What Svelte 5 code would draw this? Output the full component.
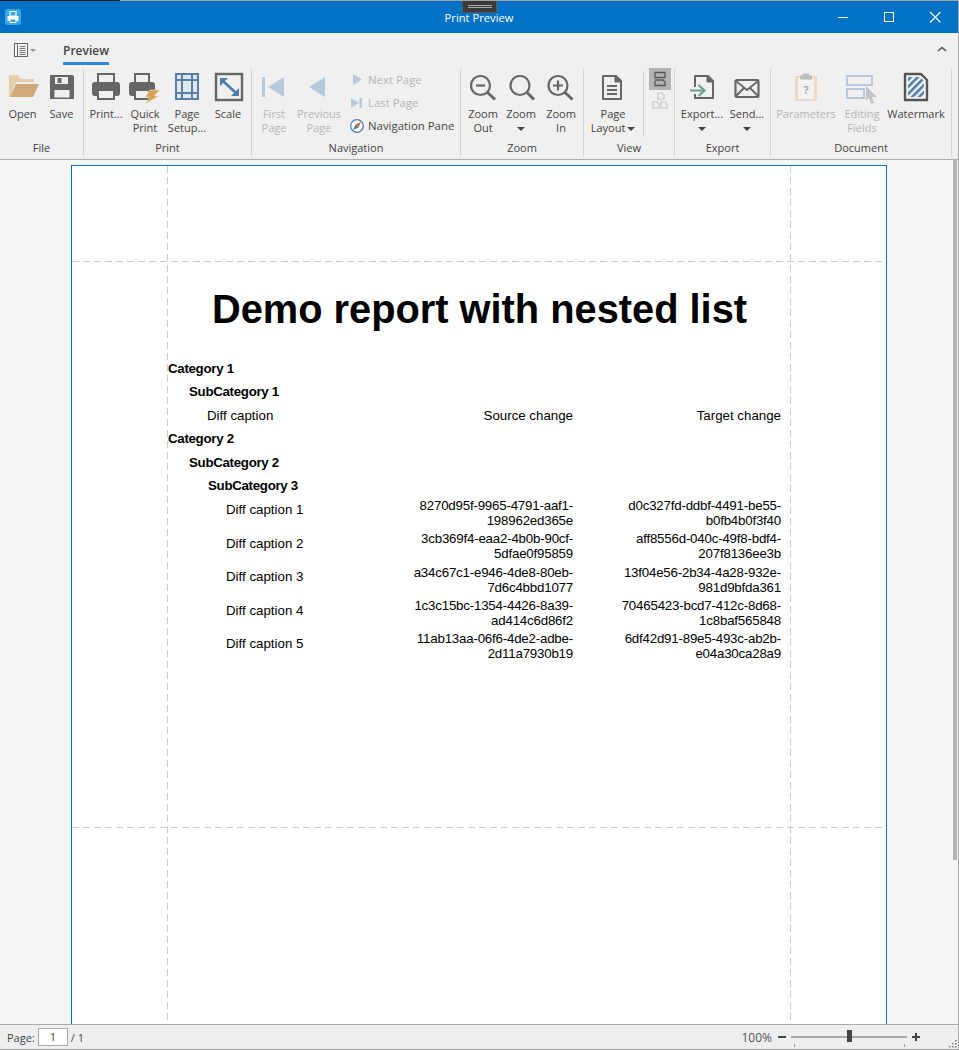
<script>
  const GROUPS = [
    { name: 'File', w: 84, buttons: [
      { icon: 'open', lines: ['Open'], w: 39 },
      { icon: 'save', lines: ['Save'], w: 39 },
    ] },
    { name: 'Print', w: 168, buttons: [
      { icon: 'print', lines: ['Print...'], w: 38 },
      { icon: 'quick', lines: ['Quick', 'Print'], w: 40 },
      { icon: 'setup', lines: ['Page', 'Setup...'], w: 44 },
      { icon: 'scale', lines: ['Scale'], w: 38 },
    ] },
    { name: 'Navigation', w: 209, small: true, buttons: [
      { icon: 'first', lines: ['First', 'Page'], w: 38, off: true },
      { icon: 'prev', lines: ['Previous', 'Page'], w: 52, off: true },
    ] },
    { name: 'Zoom', w: 123, buttons: [
      { icon: 'zoomout', lines: ['Zoom', 'Out'], w: 38 },
      { icon: 'zoom', lines: ['Zoom'], w: 38, caret: true },
      { icon: 'zoomin', lines: ['Zoom', 'In'], w: 42 },
    ] },
    { name: 'View', w: 91, view: true, buttons: [
      { icon: 'layout', lines: ['Page', 'Layout'], w: 52, inlineCaret: true },
    ] },
    { name: 'Export', w: 96, buttons: [
      { icon: 'export', lines: ['Export...'], w: 48, caret: true },
      { icon: 'send', lines: ['Send...'], w: 42, caret: true },
    ] },
    { name: 'Document', w: 181, buttons: [
      { icon: 'params', lines: ['Parameters'], w: 64, off: true },
      { icon: 'editing', lines: ['Editing', 'Fields'], w: 48, off: true },
      { icon: 'watermark', lines: ['Watermark'], w: 60 },
    ] },
  ];

  const ROWS = [
    ['Diff caption 1', '8270d95f-9965-4791-aaf1-', '198962ed365e', 'd0c327fd-ddbf-4491-be55-', 'b0fb4b0f3f40'],
    ['Diff caption 2', '3cb369f4-eaa2-4b0b-90cf-', '5dfae0f95859', 'aff8556d-040c-49f8-bdf4-', '207f8136ee3b'],
    ['Diff caption 3', 'a34c67c1-e946-4de8-80eb-', '7d6c4bbd1077', '13f04e56-2b34-4a28-932e-', '981d9bfda361'],
    ['Diff caption 4', '1c3c15bc-1354-4426-8a39-', 'ad414c6d86f2', '70465423-bcd7-412c-8d68-', '1c8baf565848'],
    ['Diff caption 5', '11ab13aa-06f6-4de2-adbe-', '2d11a7930b19', '6df42d91-89e5-493c-ab2b-', 'e04a30ca28a9'],
  ];
</script>

{#snippet printer(x, w)}
  <rect x={x + 6} y="2" width={w - 12} height="9" fill="none" stroke="#666" stroke-width="2" />
  <rect x={x} y="10" width={w} height="14" rx="3" fill="#666" />
  <rect x={x + 6} y="18" width={w - 12} height="9" fill="#f0f0f0" stroke="#666" stroke-width="2" />
{/snippet}

{#snippet icon(name)}
  <svg class="big-icon" viewBox="0 0 32 32" width="32" height="32">
    {#if name === 'open'}
      <path d="M2 3h9l3 4h13v3H9L3 25H2z" fill="#e6cfae" />
      <path d="M9 12h23l-6 13H3z" fill="#d2aa7a" />
    {:else if name === 'save'}
      <path d="M4 4a1 1 0 0 1 1-1h21a2 2 0 0 1 2 2v21a1 1 0 0 1-1 1H5a1 1 0 0 1-1-1z" fill="#666" />
      <rect x="9" y="5" width="13" height="7" fill="#f0f0f0" />
      <rect x="11.500" y="6" width="4" height="5" fill="#666" />
      <rect x="8.500" y="18" width="15" height="7.500" fill="#f0f0f0" />
    {:else if name === 'print'}
      {@render printer(2, 28)}
    {:else if name === 'quick'}
      {@render printer(0, 26)}
      <path d="M21 18h10l-6 6h5L16 32l5-7h-5z" fill="#e0a050" stroke="#f0f0f0" stroke-width=".6" />
    {:else if name === 'setup'}
      <rect x="5" y="2" width="22" height="25" fill="#dfe7ef" stroke="#5a7fa6" stroke-width="2" />
      <path d="M11 2v25M21 2v25M5 8h22M5 21h22" stroke="#5a7fa6" stroke-width="2" />
    {:else if name === 'scale'}
      <rect x="4" y="2" width="26" height="26" fill="none" stroke="#666" stroke-width="2.4" />
      <path d="M11 9l13 12" stroke="#4a7cac" stroke-width="2.6" />
      <path d="M8 6h8l-8 8zM27 24h-8l8-8z" fill="#4a7cac" />
    {:else if name === 'first'}
      <path d="M4 5h3v20H4zM26 5v20L10 15z" fill="#b8c9dc" />
    {:else if name === 'prev'}
      <path d="M22 5v20L6 15z" fill="#b8c9dc" />
    {:else if name === 'zoomout'}
      <circle cx="13.500" cy="13.500" r="9.500" fill="none" stroke="#666" stroke-width="2.200" />
      <path d="M9 13.500h9" stroke="#666" stroke-width="2.200" />
      <path d="M20.500 20.500L28 27.500" stroke="#666" stroke-width="3" />
    {:else if name === 'zoom'}
      <circle cx="15" cy="13.500" r="9.500" fill="none" stroke="#666" stroke-width="2.200" />
      <path d="M22 20.500L29 27.500" stroke="#666" stroke-width="3" />
    {:else if name === 'zoomin'}
      <circle cx="13" cy="13.500" r="9.500" fill="none" stroke="#666" stroke-width="2.200" />
      <path d="M8 13.500h10M13 8.500v10" stroke="#666" stroke-width="2.200" />
      <path d="M20 20.500L27.500 27.500" stroke="#666" stroke-width="3" />
    {:else if name === 'layout'}
      <path d="M6 4h13l5 5v18H6z" fill="none" stroke="#666" stroke-width="2" stroke-linejoin="round" />
      <path d="M18 4v6h6" fill="#666" stroke="#666" />
      <path d="M10 14h10M10 18h10M10 22h10" stroke="#666" stroke-width="2" />
    {:else if name === 'export'}
      <path d="M9 15V4h13l5 5v17H9v-4" fill="none" stroke="#666" stroke-width="2" stroke-linejoin="round" />
      <path d="M21 4v6h6" fill="#666" stroke="#666" />
      <path d="M4 18.500h13M12.500 13l6 5.500-6 5.500" fill="none" stroke="#6f9e8c" stroke-width="2.200" />
    {:else if name === 'send'}
      <rect x="4.500" y="8" width="23" height="17" rx="1.500" fill="none" stroke="#666" stroke-width="2.200" />
      <path d="M5 9l11 9 11-9M5 24l8-8M27 24l-8-8" fill="none" stroke="#666" stroke-width="1.800" />
    {:else if name === 'params'}
      <rect x="5" y="4" width="22" height="25" fill="#ead9c5" />
      <rect x="8" y="6" width="16" height="21" fill="#f2f2f2" />
      <path d="M13 1.500h6v2h3v4H10v-4h3z" fill="#bdbdbd" />
      <text x="16" y="22" class="hint">?</text>
    {:else if name === 'editing'}
      <path d="M1 4h25v9H1zM1 17h17v9H1z" fill="none" stroke="#b8c9dc" stroke-width="2" />
      <path d="M20 14l11 11h-5l2 6-3 1-2-6-3 3z" fill="#c4c4c4" />
    {:else if name === 'watermark'}
      <defs>
        <pattern id="stripes" width="5" height="5" patternUnits="userSpaceOnUse" patternTransform="rotate(-45)">
          <rect width="5" height="2.500" fill="#4a7cac" />
        </pattern>
      </defs>
      <path d="M5 2h16l6 6v20H5z" fill="#f4f4f4" stroke="#555" stroke-width="2.400" stroke-linejoin="round" />
      <path d="M8 5h12l4 4v16H8z" fill="url(#stripes)" />
    {/if}
  </svg>
{/snippet}

{#snippet navSmall()}
  <div class="small-col">
    <div class="small-btn off">
      <svg viewBox="0 0 14 14" width="14" height="14"><path d="M3 1v11l9-5.500z" fill="#b8c9dc" /></svg>
      <span>Next Page</span>
    </div>
    <div class="small-btn off">
      <svg viewBox="0 0 14 14" width="14" height="14"><path d="M1 2v10l8-5zM9.500 2H12v10H9.500z" fill="#b8c9dc" /></svg>
      <span>Last Page</span>
    </div>
    <div class="small-btn">
      <svg viewBox="0 0 14 14" width="14" height="14">
        <circle cx="7" cy="7" r="6.300" fill="#fff" stroke="#4a7cac" stroke-width="1.200" />
        <path d="M11 3L8.500 8.500 5.500 5.500z" fill="#e0632f" />
        <path d="M3 11L5.500 5.500l3 3z" fill="#4a7cac" />
      </svg>
      <span>Navigation Pane</span>
    </div>
  </div>
{/snippet}

{#snippet viewSmall()}
  <div class="view-side">
    <div class="view-btn active">
      <svg viewBox="0 0 22 22" width="22" height="22">
        <path d="M6 4.500h10v5H6zM6 13v4.500h10V14l-2-2H6" fill="none" stroke="#555" stroke-width="1.300" />
      </svg>
    </div>
    <div class="view-btn">
      <svg viewBox="0 0 22 22" width="22" height="22">
        <path d="M9 3h4l2 2v4H9zM4 12h4l2 2v4H4zM12 12h4l2 2v4h-6z" fill="none" stroke="#c4c4c4" stroke-width="1.100" />
      </svg>
    </div>
  </div>
{/snippet}

<div class="window">
  <div class="topline"><div class="topline-dark"></div></div>

  <header class="titlebar">
    <svg class="app-icon" viewBox="0 0 16 16" width="16" height="16">
      <rect width="16" height="16" rx="2" fill="#35a6e8" />
      <path d="M5 2.500h6V7H5z" fill="none" stroke="#fff" stroke-width="1.200" />
      <path d="M2.500 7h11v5h-11z" fill="#fff" />
      <path d="M5 10h6v3.500H5z" fill="#35a6e8" stroke="#fff" />
    </svg>
    <div class="title">Print Preview</div>
    <div class="controls">
      <svg viewBox="0 0 46 32" width="46" height="32"><path d="M18 16.500h10" stroke="#fff" /></svg>
      <svg viewBox="0 0 46 32" width="46" height="32"><rect x="18.500" y="11.500" width="9" height="9" fill="none" stroke="#fff" /></svg>
      <svg viewBox="0 0 46 32" width="46" height="32"><path d="M18 11l10.500 10.500M28.500 11L18 21.500" stroke="#fff" stroke-width="1.100" /></svg>
    </div>
    <div class="drag-tab"><span></span><span></span></div>
  </header>

  <nav class="tabs">
    <div class="menu-btn">
      <svg viewBox="0 0 14 14" width="14" height="14">
        <rect x=".5" y=".5" width="13" height="13" fill="#f6f6f6" stroke="#666" />
        <path d="M3.500 1v12" stroke="#666" />
        <path d="M5.500 3.500h6M5.500 5.500h6M5.500 7.500h6M5.500 9.500h6M5.500 11.500h6" stroke="#777" />
      </svg>
      <i class="menu-caret"></i>
    </div>
    <div class="tab">Preview</div>
    <svg class="collapse" viewBox="0 0 10 6" width="10" height="6"><path d="M1 5l4-3.500L9 5" fill="none" stroke="#555" stroke-width="1.600" /></svg>
  </nav>

  <section class="ribbon">
    {#each GROUPS as g}
      <div class="group" style="width: {g.w}px">
        <div class="buttons">
          {#each g.buttons as b}
            <div class="btn" class:off={b.off} style="width: {b.w}px">
              {@render icon(b.icon)}
              <div class="label">
                {#each b.lines as line, i}
                  <div>{line}{#if b.inlineCaret && i === 1}<i class="caret inline"></i>{/if}</div>
                {/each}
                {#if b.caret}<div class="caret-line"><i class="caret"></i></div>{/if}
              </div>
            </div>
          {/each}
          {#if g.small}{@render navSmall()}{/if}
          {#if g.view}{@render viewSmall()}{/if}
        </div>
        <div class="group-name">{g.name}</div>
      </div>
    {/each}
  </section>

  <main class="viewer">
    <div class="page">
      <i class="guide v left"></i>
      <i class="guide v right"></i>
      <i class="guide h top"></i>
      <i class="guide h bottom"></i>

      <div class="report">
        <h1>Demo report with nested list</h1>
        <div class="line bold">Category 1</div>
        <div class="line bold lvl1">SubCategory 1</div>
        <div class="row head">
          <div class="cap">Diff caption</div>
          <div class="val">Source change</div>
          <div class="val">Target change</div>
        </div>
        <div class="line bold">Category 2</div>
        <div class="line bold lvl1">SubCategory 2</div>
        <div class="line bold lvl2">SubCategory 3</div>
        {#each ROWS as r}
          <div class="row data">
            <div class="cap deep">{r[0]}</div>
            <div class="val">{r[1]}<br />{r[2]}</div>
            <div class="val">{r[3]}<br />{r[4]}</div>
          </div>
        {/each}
      </div>
    </div>
    <div class="scrollthumb"></div>
  </main>

  <footer class="status">
    <span class="page-label">Page:</span>
    <div class="page-input">1</div>
    <span class="page-total">/ 1</span>
    <div class="spacer"></div>
    <span class="pct">100%</span>
    <i class="minus"></i>
    <div class="slider">
      <i class="thumb"></i>
      <i class="tick a"></i>
      <i class="tick b"></i>
    </div>
    <i class="plus"></i>
    <svg class="grip" viewBox="0 0 10 10" width="10" height="10">
      <path d="M8 8h1.500v1.500H8zM5 8h1.500v1.500H5zM2 8h1.500v1.500H2zM8 5h1.500v1.500H8zM5 5h1.500v1.500H5zM8 2h1.500v1.500H8z" fill="#777" />
    </svg>
  </footer>
</div>

<style>
  :global(body) {
    margin: 0;
    overflow: hidden;
  }

  .window {
    height: 1050px;
    width: 959px;
    box-sizing: border-box;
    display: flex;
    flex-direction: column;
    border-right: 1px solid #a8a8a8;
    border-bottom: 1px solid #a8a8a8;
    background: #f0f0f0;
    font-family: "Open Sans", "Liberation Sans", sans-serif;
    font-size: 11px;
    color: #444;
    overflow: hidden;
  }

  .topline {
    height: 1px;
    background: #a0a0a0;
    flex: none;
  }
  .topline-dark {
    width: 120px;
    height: 1px;
    background: #222;
  }

  .titlebar {
    height: 32px;
    flex: none;
    background: #0072c6;
    position: relative;
    display: flex;
    align-items: center;
    justify-content: center;
    color: #fff;
  }
  .app-icon {
    position: absolute;
    left: 5px;
    top: 8px;
  }
  .title {
    font-size: 11.200px;
  }
  .controls {
    position: absolute;
    right: 0;
    top: 0;
    display: flex;
  }
  .controls svg {
    display: block;
  }
  .drag-tab {
    position: absolute;
    left: 462px;
    top: 0;
    width: 35px;
    height: 12px;
    box-sizing: border-box;
    background: #3a3a3a;
    border: 1px solid #555;
    border-top: 0;
    display: flex;
    flex-direction: column;
    align-items: center;
    gap: 1px;
    padding-top: 4px;
  }
  .drag-tab span {
    display: block;
    width: 24px;
    height: 1px;
    background: #aaa;
  }

  .tabs {
    height: 35px;
    flex: none;
    position: relative;
    display: flex;
    align-items: flex-start;
  }
  .menu-btn {
    display: flex;
    align-items: center;
    gap: 2px;
    margin: 10px 0 0 14px;
  }
  .menu-btn svg {
    display: block;
  }
  .menu-caret {
    width: 0;
    height: 0;
    border: 3px solid transparent;
    border-top: 3px solid #999;
    border-bottom: 0;
  }
  .tab {
    margin: 9px 0 0 27px;
    height: 20px;
    line-height: 17px;
    font-size: 12px;
    font-weight: 600;
    border-bottom: 3px solid #2b88d8;
  }
  .collapse {
    position: absolute;
    left: 937px;
    top: 13px;
  }

  .ribbon {
    height: 91px;
    flex: none;
    display: flex;
    border-bottom: 1px solid #b0b0b0;
    box-sizing: content-box;
  }
  .group {
    box-sizing: border-box;
    height: 87px;
    margin-top: 1px;
    border-right: 1px solid #d2d2d2;
    display: flex;
    flex-direction: column;
    flex: none;
  }
  .buttons {
    flex: 1;
    display: flex;
    padding-left: 3px;
    min-height: 0;
  }
  .btn {
    display: flex;
    flex-direction: column;
    align-items: center;
    padding-top: 3px;
    flex: none;
    text-align: center;
  }
  .big-icon {
    display: block;
    flex: none;
    overflow: visible;
  }
  .label {
    margin-top: 3px;
    line-height: 14px;
    white-space: nowrap;
  }
  .off,
  .off .label {
    color: #b4b4b4;
  }
  .hint {
    font-size: 11px;
    fill: #aaa;
    text-anchor: middle;
    font-family: "Open Sans", sans-serif;
    font-weight: 700;
  }
  .caret {
    display: inline-block;
    width: 0;
    height: 0;
    border: 4px solid transparent;
    border-top: 4px solid #444;
    border-bottom: 0;
    vertical-align: middle;
  }
  .caret.inline {
    margin-left: 2px;
  }
  .caret-line {
    height: 14px;
  }
  .group-name {
    height: 17px;
    line-height: 18px;
    text-align: center;
    flex: none;
  }

  .small-col {
    padding-left: 5px;
    margin-top: -1px;
    flex: none;
  }
  .small-btn {
    height: 23px;
    display: flex;
    align-items: center;
    gap: 4px;
    white-space: nowrap;
    width: 104px;
    font-size: 11.400px;
  }
  .small-btn svg {
    display: block;
    flex: none;
  }

  .view-side {
    margin-left: 4px;
    padding-left: 5px;
    border-left: 1px solid #d2d2d2;
    height: 66px;
    flex: none;
    margin-top: 2px;
  }
  .view-btn {
    width: 22px;
    height: 22px;
  }
  .view-btn svg {
    display: block;
  }
  .view-btn.active {
    background: #b4b4b4;
    margin-top: -3px;
  }

  .viewer {
    flex: 1;
    min-height: 0;
    position: relative;
    background: #f6f6f6;
    overflow: hidden;
    padding: 5px 0 0 71px;
  }
  .scrollthumb {
    position: absolute;
    right: 1px;
    top: 0;
    width: 4px;
    height: 700px;
    background: #b4b4b4;
  }

  .page {
    position: relative;
    box-sizing: border-box;
    width: 816px;
    height: 1056px;
    background: #fff;
    border: 1px solid #0072c6;
    padding: 95px 0 0 96px;
  }
  .guide {
    position: absolute;
    display: block;
  }
  .guide.v {
    width: 1px;
    top: 0;
    bottom: 0;
    background: repeating-linear-gradient(to bottom, #ccc 0 7px, transparent 7px 11px);
  }
  .guide.h {
    height: 1px;
    left: 0;
    right: 0;
    background: repeating-linear-gradient(to right, #ccc 0 7px, transparent 7px 11px);
  }
  .guide.left { left: 95px; }
  .guide.right { left: 718px; }
  .guide.top { top: 95px; }
  .guide.bottom { top: 661px; }

  .report {
    position: relative;
    width: 623px;
    font-family: "Liberation Sans", Arial, sans-serif;
    font-size: 13.300px;
    line-height: 15px;
    color: #000;
  }
  h1 {
    margin: 0;
    height: 96px;
    padding-top: 25px;
    box-sizing: border-box;
    text-align: center;
    font-size: 39.800px;
    line-height: 46px;
    font-weight: 700;
  }
  .line {
    height: 23.400px;
    padding-top: 4px;
    box-sizing: border-box;
    white-space: nowrap;
  }
  .bold {
    font-weight: 700;
    letter-spacing: -0.3px;
  }
  .lvl1 { padding-left: 21px; }
  .lvl2 { padding-left: 40px; }

  .row {
    display: grid;
    grid-template-columns: 200px 205px 208px;
    height: 33.400px;
    box-sizing: border-box;
  }
  .row.head {
    height: 23.400px;
    padding-top: 4px;
  }
  .row.data {
    padding-top: 0.500px;
  }
  .row.data .val {
    letter-spacing: -0.2px;
  }
  .cap {
    padding-left: 39px;
    white-space: nowrap;
  }
  .cap.deep {
    padding-left: 58px;
    padding-top: 4.500px;
  }
  .val {
    text-align: right;
    white-space: nowrap;
  }

  .status {
    height: 25px;
    flex: none;
    box-sizing: border-box;
    border-top: 1px solid #aaa;
    background: #eee;
    display: flex;
    align-items: center;
    padding-left: 7px;
    position: relative;
  }
  .page-input {
    width: 30px;
    height: 18px;
    box-sizing: border-box;
    border: 1px solid #aaa;
    background: #fff;
    text-align: center;
    line-height: 16px;
    margin: 0 3px 0 3px;
  }
  .spacer {
    flex: 1;
  }
  .pct {
    margin-right: 6px;
    color: #555;
    font-size: 12px;
  }
  .minus {
    width: 8px;
    height: 2px;
    background: #444;
    margin-right: 5px;
  }
  .slider {
    width: 116px;
    height: 2px;
    background: #a8a8a8;
    position: relative;
  }
  .thumb {
    position: absolute;
    left: 56px;
    top: -6px;
    width: 5px;
    height: 12px;
    background: #444;
  }
  .tick {
    position: absolute;
    top: 8px;
    width: 1px;
    height: 3px;
    background: #999;
  }
  .tick.a { left: 3px; }
  .tick.b { left: 113px; }
  .plus {
    width: 8px;
    height: 8px;
    margin: 0 38px 0 5px;
    background:
      linear-gradient(#444, #444) center / 8px 2px no-repeat,
      linear-gradient(#444, #444) center / 2px 8px no-repeat;
  }
  .grip {
    position: absolute;
    right: 1px;
    bottom: 1px;
  }
</style>
